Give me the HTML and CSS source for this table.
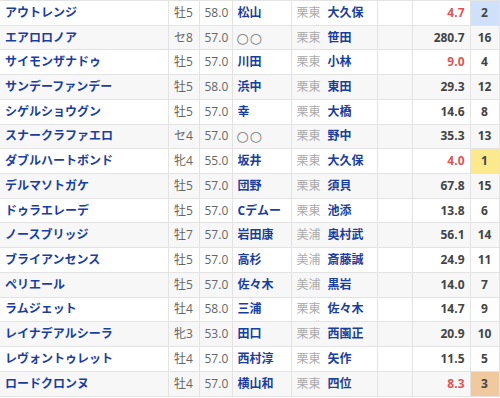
FILE: index.html
```html
<!DOCTYPE html>
<html lang="ja">
<head>
<meta charset="utf-8">
<link rel="stylesheet" href="styles.css">
</head>
<body>
<table class="entries">
<colgroup>
<col class="c-name"><col class="c-sex"><col class="c-wt"><col class="c-jky"><col class="c-trn"><col class="c-blank"><col class="c-odds"><col class="c-pop">
</colgroup>
<tbody>
<tr><td class="name">アウトレンジ</td><td class="sex">牡5</td><td class="wt">58.0</td><td class="jky">松山</td><td class="trn"><span class="area">栗東</span><span class="tname">大久保</span></td><td></td><td class="odds hot">4.7</td><td class="pop p2">2</td></tr>
<tr><td class="name">エアロロノア</td><td class="sex">セ8</td><td class="wt">57.0</td><td class="jky none">○○</td><td class="trn"><span class="area">栗東</span><span class="tname">笹田</span></td><td></td><td class="odds">280.7</td><td class="pop">16</td></tr>
<tr><td class="name">サイモンザナドゥ</td><td class="sex">牡5</td><td class="wt">57.0</td><td class="jky">川田</td><td class="trn"><span class="area">栗東</span><span class="tname">小林</span></td><td></td><td class="odds hot">9.0</td><td class="pop">4</td></tr>
<tr><td class="name">サンデーファンデー</td><td class="sex">牡5</td><td class="wt">58.0</td><td class="jky">浜中</td><td class="trn"><span class="area">栗東</span><span class="tname">東田</span></td><td></td><td class="odds">29.3</td><td class="pop">12</td></tr>
<tr><td class="name">シゲルショウグン</td><td class="sex">牡5</td><td class="wt">57.0</td><td class="jky">幸</td><td class="trn"><span class="area">栗東</span><span class="tname">大橋</span></td><td></td><td class="odds">14.6</td><td class="pop">8</td></tr>
<tr><td class="name">スナークラファエロ</td><td class="sex">セ4</td><td class="wt">57.0</td><td class="jky none">○○</td><td class="trn"><span class="area">栗東</span><span class="tname">野中</span></td><td></td><td class="odds">35.3</td><td class="pop">13</td></tr>
<tr><td class="name">ダブルハートボンド</td><td class="sex">牝4</td><td class="wt">55.0</td><td class="jky">坂井</td><td class="trn"><span class="area">栗東</span><span class="tname">大久保</span></td><td></td><td class="odds hot">4.0</td><td class="pop p1">1</td></tr>
<tr><td class="name">デルマソトガケ</td><td class="sex">牡5</td><td class="wt">57.0</td><td class="jky">団野</td><td class="trn"><span class="area">栗東</span><span class="tname">須貝</span></td><td></td><td class="odds">67.8</td><td class="pop">15</td></tr>
<tr><td class="name">ドゥラエレーデ</td><td class="sex">牡5</td><td class="wt">57.0</td><td class="jky">Cデムー</td><td class="trn"><span class="area">栗東</span><span class="tname">池添</span></td><td></td><td class="odds">13.8</td><td class="pop">6</td></tr>
<tr><td class="name">ノースブリッジ</td><td class="sex">牡7</td><td class="wt">57.0</td><td class="jky">岩田康</td><td class="trn"><span class="area">美浦</span><span class="tname">奥村武</span></td><td></td><td class="odds">56.1</td><td class="pop">14</td></tr>
<tr><td class="name">ブライアンセンス</td><td class="sex">牡5</td><td class="wt">57.0</td><td class="jky">高杉</td><td class="trn"><span class="area">美浦</span><span class="tname">斎藤誠</span></td><td></td><td class="odds">24.9</td><td class="pop">11</td></tr>
<tr><td class="name">ペリエール</td><td class="sex">牡5</td><td class="wt">57.0</td><td class="jky">佐々木</td><td class="trn"><span class="area">美浦</span><span class="tname">黒岩</span></td><td></td><td class="odds">14.0</td><td class="pop">7</td></tr>
<tr><td class="name">ラムジェット</td><td class="sex">牡4</td><td class="wt">58.0</td><td class="jky">三浦</td><td class="trn"><span class="area">栗東</span><span class="tname">佐々木</span></td><td></td><td class="odds">14.7</td><td class="pop">9</td></tr>
<tr><td class="name">レイナデアルシーラ</td><td class="sex">牝3</td><td class="wt">53.0</td><td class="jky">田口</td><td class="trn"><span class="area">栗東</span><span class="tname">西園正</span></td><td></td><td class="odds">20.9</td><td class="pop">10</td></tr>
<tr><td class="name">レヴォントゥレット</td><td class="sex">牡4</td><td class="wt">57.0</td><td class="jky">西村淳</td><td class="trn"><span class="area">栗東</span><span class="tname">矢作</span></td><td></td><td class="odds">11.5</td><td class="pop">5</td></tr>
<tr><td class="name">ロードクロンヌ</td><td class="sex">牡4</td><td class="wt">57.0</td><td class="jky">横山和</td><td class="trn"><span class="area">栗東</span><span class="tname">四位</span></td><td></td><td class="odds hot">8.3</td><td class="pop p3">3</td></tr>
</tbody>
</table>
</body>
</html>
```
FILE: styles.css
```css
html, body {
  margin: 0;
  padding: 0;
  background: #fff;
}
body {
  font-family: "Open Sans", "Noto Sans CJK JP", sans-serif;
  font-size: 12px;
  color: #555;
}
.entries {
  border-collapse: collapse;
  table-layout: fixed;
  width: 499px;
}
.c-name { width: 168px; }
.c-sex { width: 31px; }
.c-wt { width: 33px; }
.c-jky { width: 59px; }
.c-trn { width: 86px; }
.c-blank { width: 35px; }
.c-odds { width: 58px; }
.c-pop { width: 29px; }
.entries tr {
  height: 24.73px;
}
.entries tr:nth-child(even) td {
  background: #f7f7f7;
}
.entries td {
  border: 1px solid #e3e3e3;
  padding: 0 5px;
  white-space: nowrap;
  overflow: hidden;
  line-height: 16px;
}
.entries td:first-child {
  border-left: none;
}
.name {
  color: #1a3e9e;
  font-weight: bold;
  padding-left: 7px;
}
.sex, .wt {
  text-align: center;
  color: #666;
  padding: 0 1px;
}
.jky {
  color: #1a3e9e;
  font-weight: bold;
}
.entries td.jky.none {
  font-family: "DejaVu Sans", sans-serif;
  color: #777;
  font-weight: normal;
  font-size: 14px;
  letter-spacing: 1px;
  padding-left: 4px;
}
.area {
  color: #aaa;
  margin-right: 7px;
}
.tname {
  color: #1a3e9e;
  font-weight: bold;
}
.odds {
  text-align: right;
  font-weight: bold;
  color: #444;
  padding-right: 6px;
}
.odds.hot {
  color: #e05555;
}
.pop {
  text-align: center;
  font-weight: bold;
  color: #444;
  padding: 0;
}
.entries tr td.p1 { background: #fbe98b; }
.entries tr td.p2 { background: #cfe0fa; }
.entries tr td.p3 { background: #f0c99e; }
```
